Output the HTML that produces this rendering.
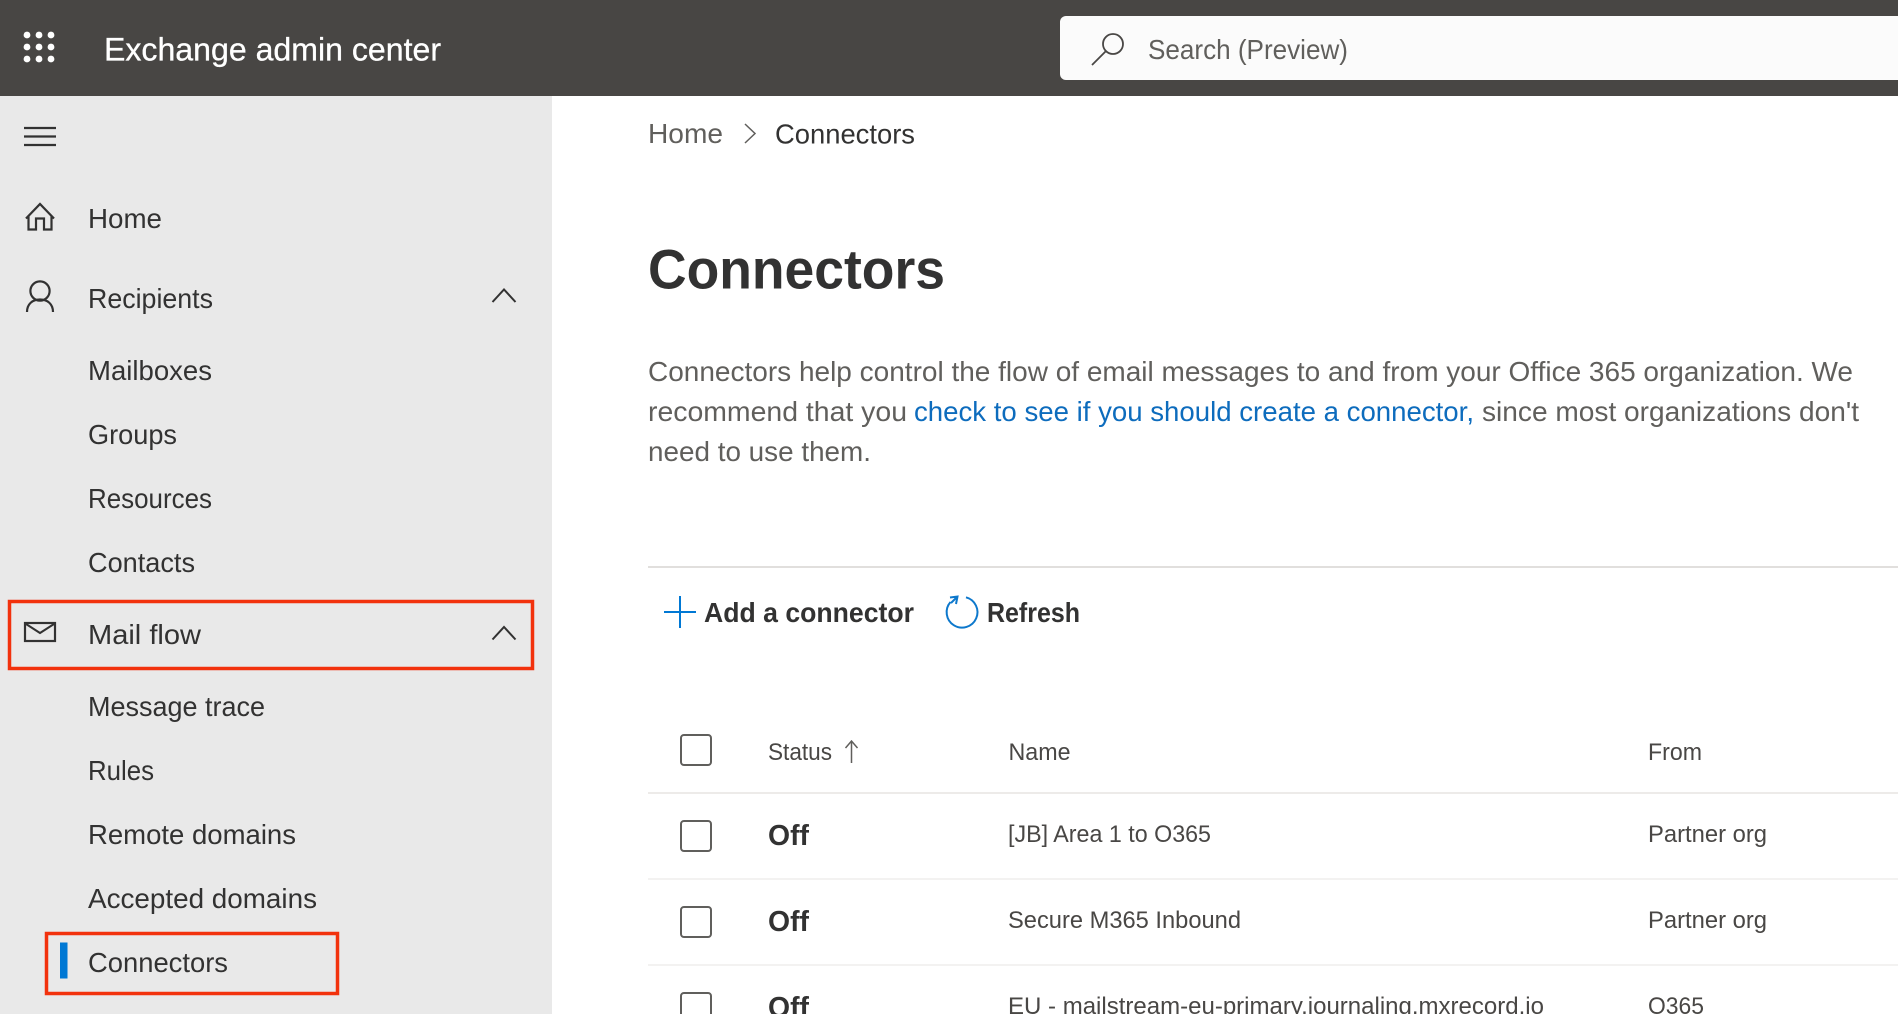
<!DOCTYPE html>
<html><head><meta charset="utf-8"><title>Exchange admin center</title>
<style>
html,body{margin:0;padding:0;background:#fff;width:1898px;height:1014px;overflow:hidden}
svg{display:block;position:absolute;left:0;top:0}
text{font-family:"Liberation Sans",sans-serif}
.n{font-size:28px;fill:#323130}
.p{font-size:27.500px;fill:#605e5c}
.l{font-size:27.500px;fill:#0f6cbd}
.t{font-size:24.500px;fill:#484644}
.o{font-size:29px;font-weight:bold;fill:#323130}
.b{font-size:28px;font-weight:bold;fill:#323130}
</style></head><body>
<svg width="1898" height="1014" viewBox="0 0 1898 1014" xmlns="http://www.w3.org/2000/svg">
<defs><filter id="s" x="-2%" y="-2%" width="104%" height="104%"><feGaussianBlur stdDeviation="0.3"/></filter></defs>
<rect width="1898" height="1014" fill="#fff"/>
<rect width="552" height="1014" fill="#e9e9e9"/>
<rect width="1898" height="96" fill="#484644"/>
<g filter="url(#s)">
<g fill="#fff"><circle cx="27" cy="35" r="3.400"/><circle cx="39" cy="35" r="3.400"/><circle cx="51" cy="35" r="3.400"/><circle cx="27" cy="47" r="3.400"/><circle cx="39" cy="47" r="3.400"/><circle cx="51" cy="47" r="3.400"/><circle cx="27" cy="59" r="3.400"/><circle cx="39" cy="59" r="3.400"/><circle cx="51" cy="59" r="3.400"/></g>
<text x="104" y="60.500" font-size="32" fill="#fff" stroke="#fff" stroke-width="0.300" textLength="337" lengthAdjust="spacingAndGlyphs">Exchange admin center</text>
<path d="M1066 16H1898V80H1066a6 6 0 0 1-6-6V22a6 6 0 0 1 6-6z" fill="#fbfbfb"/>
<circle cx="1113" cy="44" r="10" fill="none" stroke="#484644" stroke-width="1.800"/>
<path d="M1105.500 51.500L1092 65" stroke="#484644" stroke-width="1.800" fill="none"/>
<text x="1148" y="59" class="p" textLength="200" lengthAdjust="spacingAndGlyphs">Search (Preview)</text>

<path d="M24 128H56M24 136.500H56M24 145H56" stroke="#323130" stroke-width="2.200" fill="none"/>
<path d="M26 218.500L40 204L54 218.500M28.500 215.500V229.500H36V218.500H44V229.500H51.500V215.500" fill="none" stroke="#323130" stroke-width="2.200"/>
<circle cx="40" cy="291" r="9.600" fill="none" stroke="#323130" stroke-width="2.200"/>
<path d="M27 312c0-8 5.500-12.500 13-12.500s13 4.500 13 12.500" fill="none" stroke="#323130" stroke-width="2.200"/>
<path d="M492.500 302L504 289.500L515.500 302" fill="none" stroke="#323130" stroke-width="2"/>
<path d="M492.500 639.500L504 627L515.500 639.500" fill="none" stroke="#323130" stroke-width="2"/>
<rect x="25" y="623" width="30" height="18" fill="none" stroke="#323130" stroke-width="2.200"/>
<path d="M26 624L40 633L54 624" fill="none" stroke="#323130" stroke-width="2"/>

<text x="88" y="228" class="n" textLength="74" lengthAdjust="spacingAndGlyphs">Home</text>
<text x="88" y="308" class="n" textLength="125" lengthAdjust="spacingAndGlyphs">Recipients</text>
<text x="88" y="380" class="n" textLength="124" lengthAdjust="spacingAndGlyphs">Mailboxes</text>
<text x="88" y="444" class="n" textLength="89" lengthAdjust="spacingAndGlyphs">Groups</text>
<text x="88" y="508" class="n" textLength="124" lengthAdjust="spacingAndGlyphs">Resources</text>
<text x="88" y="572" class="n" textLength="107" lengthAdjust="spacingAndGlyphs">Contacts</text>
<text x="88" y="644" class="n" textLength="113" lengthAdjust="spacingAndGlyphs">Mail flow</text>
<text x="88" y="716" class="n" textLength="177" lengthAdjust="spacingAndGlyphs">Message trace</text>
<text x="88" y="780" class="n" textLength="66" lengthAdjust="spacingAndGlyphs">Rules</text>
<text x="88" y="844" class="n" textLength="208" lengthAdjust="spacingAndGlyphs">Remote domains</text>
<text x="88" y="908" class="n" textLength="229" lengthAdjust="spacingAndGlyphs">Accepted domains</text>
<text x="88" y="972" class="n" textLength="140" lengthAdjust="spacingAndGlyphs">Connectors</text>

<rect x="9.500" y="601.500" width="523" height="67" fill="none" stroke="#f2300f" stroke-width="3.500"/>
<rect x="46.500" y="933.500" width="291" height="60" fill="none" stroke="#f2300f" stroke-width="3.500"/>
<rect x="60" y="942.500" width="7.500" height="36" fill="#0078d4"/>

<text x="648" y="143" class="p" textLength="75" lengthAdjust="spacingAndGlyphs">Home</text>
<path d="M745 124L755 133.500L745 143" fill="none" stroke="#605e5c" stroke-width="1.500"/>
<text x="775" y="143.500" class="n" textLength="140" lengthAdjust="spacingAndGlyphs">Connectors</text>
<text x="648" y="288.500" font-size="56" font-weight="bold" fill="#323130" textLength="297" lengthAdjust="spacingAndGlyphs">Connectors</text>

<text x="648" y="381" class="p" textLength="1205" lengthAdjust="spacingAndGlyphs">Connectors help control the flow of email messages to and from your Office 365 organization. We</text>
<text x="648" y="421" class="p" textLength="259" lengthAdjust="spacingAndGlyphs">recommend that you</text>
<text x="914" y="421" class="l" textLength="560" lengthAdjust="spacingAndGlyphs">check to see if you should create a connector,</text>
<text x="1482" y="421" class="p" textLength="377" lengthAdjust="spacingAndGlyphs">since most organizations don't</text>
<text x="648" y="461" class="p" textLength="223" lengthAdjust="spacingAndGlyphs">need to use them.</text>

<rect x="648" y="566" width="1250" height="2" fill="#e1dfdd"/>
<path d="M664 612H696M680 596V628" stroke="#0078d4" stroke-width="2" fill="none"/>
<text x="704" y="622" class="b" textLength="210" lengthAdjust="spacingAndGlyphs">Add a connector</text>
<path d="M966 597.300A15.400 15.400 0 1 1 950.500 602" fill="none" stroke="#0f78cc" stroke-width="2"/>
<path d="M950 597.500L957.500 596.500L956 604M957 597L951 603" fill="none" stroke="#0f78cc" stroke-width="2"/>
<text x="987" y="622" class="b" textLength="93" lengthAdjust="spacingAndGlyphs">Refresh</text>

<rect x="681" y="735" width="30" height="30" rx="3" fill="none" stroke="#605e5c" stroke-width="2"/>
<text x="768" y="760" class="t" textLength="64" lengthAdjust="spacingAndGlyphs">Status</text>
<path d="M851.500 763V741M845.500 748L851.500 741L857.500 748" fill="none" stroke="#605e5c" stroke-width="1.500"/>
<text x="1008.500" y="760" class="t" textLength="62" lengthAdjust="spacingAndGlyphs">Name</text>
<text x="1648" y="760" class="t" textLength="54" lengthAdjust="spacingAndGlyphs">From</text>
<rect x="648" y="792" width="1250" height="2" fill="#edebe9"/>

<rect x="681" y="821" width="30" height="30" rx="3" fill="none" stroke="#605e5c" stroke-width="2"/>
<text x="768" y="845" class="o" textLength="41" lengthAdjust="spacingAndGlyphs">Off</text>
<text x="1008" y="842" class="t" textLength="203" lengthAdjust="spacingAndGlyphs">[JB] Area 1 to O365</text>
<text x="1648" y="842" class="t" textLength="119" lengthAdjust="spacingAndGlyphs">Partner org</text>
<rect x="648" y="878" width="1250" height="2" fill="#f3f2f1"/>

<rect x="681" y="907" width="30" height="30" rx="3" fill="none" stroke="#605e5c" stroke-width="2"/>
<text x="768" y="931" class="o" textLength="41" lengthAdjust="spacingAndGlyphs">Off</text>
<text x="1008" y="928" class="t" textLength="233" lengthAdjust="spacingAndGlyphs">Secure M365 Inbound</text>
<text x="1648" y="928" class="t" textLength="119" lengthAdjust="spacingAndGlyphs">Partner org</text>
<rect x="648" y="964" width="1250" height="2" fill="#f3f2f1"/>

<rect x="681" y="993" width="30" height="30" rx="3" fill="none" stroke="#605e5c" stroke-width="2"/>
<text x="768" y="1017" class="o" textLength="41" lengthAdjust="spacingAndGlyphs">Off</text>
<text x="1008" y="1014" class="t" textLength="536" lengthAdjust="spacingAndGlyphs">EU - mailstream-eu-primary.journaling.mxrecord.io</text>
<text x="1648" y="1014" class="t" textLength="56" lengthAdjust="spacingAndGlyphs">O365</text>
</g>
</svg>
</body></html>
